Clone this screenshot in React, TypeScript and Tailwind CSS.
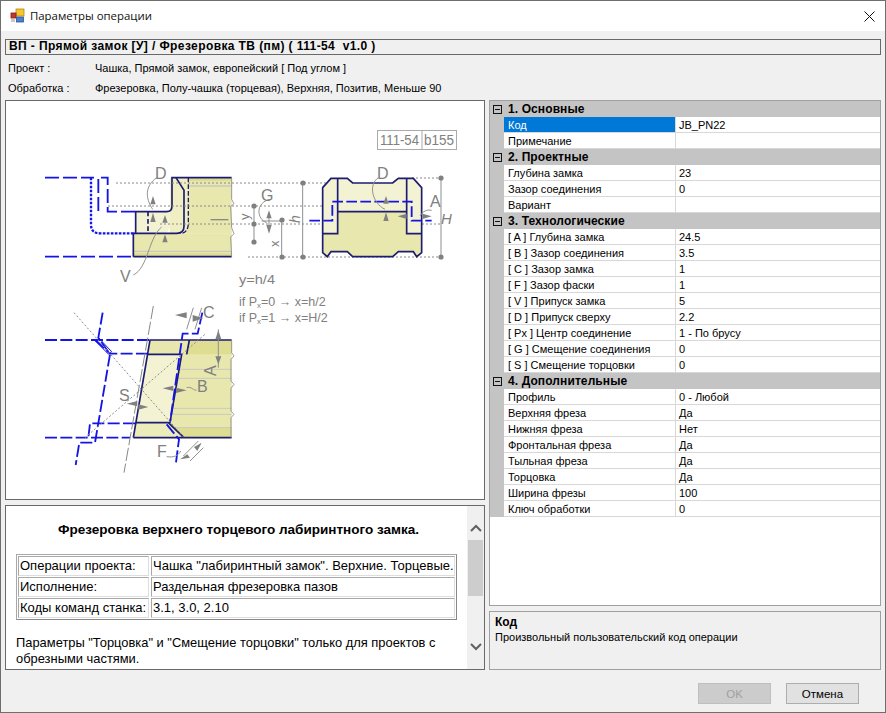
import React from "react";

const font = "font-['Liberation_Sans',Arial,sans-serif]";

type Row = { l: string; v?: string; sel?: boolean };
const groups: { t: string; rows: Row[] }[] = [
  { t: "1. Основные", rows: [{ l: "Код", v: "JB_PN22", sel: true }, { l: "Примечание" }] },
  { t: "2. Проектные", rows: [{ l: "Глубина замка", v: "23" }, { l: "Зазор соединения", v: "0" }, { l: "Вариант" }] },
  {
    t: "3. Технологические",
    rows: [
      { l: "[ A ] Глубина замка", v: "24.5" },
      { l: "[ B ] Зазор соединения", v: "3.5" },
      { l: "[ C ] Зазор замка", v: "1" },
      { l: "[ F ] Зазор фаски", v: "1" },
      { l: "[ V ] Припуск замка", v: "5" },
      { l: "[ D ] Припуск сверху", v: "2.2" },
      { l: "[ Px ] Центр соединение", v: "1 - По брусу" },
      { l: "[ G ] Смещение соединения", v: "0" },
      { l: "[ S ] Смещение торцовки", v: "0" },
    ],
  },
  {
    t: "4. Дополнительные",
    rows: [
      { l: "Профиль", v: "0 - Любой" },
      { l: "Верхняя фреза", v: "Да" },
      { l: "Нижняя фреза", v: "Нет" },
      { l: "Фронтальная фреза", v: "Да" },
      { l: "Тыльная фреза", v: "Да" },
      { l: "Торцовка", v: "Да" },
      { l: "Ширина фрезы", v: "100" },
      { l: "Ключ обработки", v: "0" },
    ],
  },
];

const NAVY = "#1c1c70";
const BLUE = "#1414e6";

function Dot({ x, y }: { x: number; y: number }) {
  return <circle cx={x} cy={y} r={2.6} fill="#808080" />;
}

function Diagram() {
  const lbl = { fill: "#808080", fontFamily: "'Liberation Sans',sans-serif" };
  const nav = { fill: "none", stroke: NAVY, strokeWidth: 5 };
  const blu = { fill: "none", stroke: BLUE, strokeWidth: 5.5, strokeDasharray: "42 12" };
  const dot = { stroke: "#8a8a8a", strokeWidth: 1, strokeDasharray: "2 2", fill: "none" };
  const arrow = "#808080";
  return (
    <svg width="478" height="398" viewBox="6 100 478 398" className="block">
      {/* Stamp */}
      <rect x="377.5" y="129.5" width="79" height="19" fill="#fff" stroke="#aaa" />
      <line x1="422" y1="129" x2="422" y2="148" stroke="#aaa" />
      <text x="380" y="144" fontSize="15" textLength="39" lengthAdjust="spacingAndGlyphs" {...lbl}>111-54</text>
      <text x="424" y="144" fontSize="15" textLength="30" lengthAdjust="spacingAndGlyphs" {...lbl}>b155</text>

      {/* Section 1 */}
      <g transform="translate(20 120) scale(0.33333)">
        <path d="M340 337 L635 337 L635 407 L342 407 Z" fill="#e8e7ae" />
        <path d="M450 170 H635 V337 H450 Z" fill="#e8e7ae" />
        <path d="M450 170 H505 V320 L490 337 H450 Z" fill="#f0efc4" />
        <path d="M347 272 H450 V320 L440 337 H347 Z" fill="#f3f2d2" />
        <path d="M505 170 H635 V180 H505 Z" fill="#dedd92" />
        <path d="M342 397 H635 V407 H342 Z" fill="#dedd92" />
        <path d="M505 195 H635 M342 391 H635" stroke="#c9c9c0" strokeWidth="4" />
        <path d="M340 407 V337 H470 Q492 337 492 315 V208 L468 170" {...nav} />
        <path d="M347 337 V272 H440 Q456 272 456 255 V170 H635 M340 407 H635" {...nav} />
        <path d="M505 170 V305 Q505 337 480 337" {...nav} strokeDasharray="14 6" strokeWidth="4" />
        <path d="M384 272 V337" {...nav} strokeDasharray="14 8" />
        <path d="M635 170 V235 L642 248 L632 256 L635 320 L642 338 L632 348 L635 407" fill="none" stroke="#888" strokeWidth="2.5" />
        <path d="M75 170 H222 M235 270 V170 H263 V272 H350 M75 407 H340" {...blu} />
        <path d="M213 170 V310 Q213 337 240 337 H345" fill="none" stroke={BLUE} strokeWidth="7" strokeDasharray="8 4" />
        <path d="M410 170 C375 195 375 230 398 265 M340 462 C385 440 385 350 425 318" fill="none" stroke="#909090" strokeWidth="3" />
        <path d="M399 225 L391 250 H407 Z M399 275 L391 303 H407 Z M435 282 L427 305 H443 Z M435 340 L427 364 H443 Z" fill={arrow} />
        <line x1="572" y1="296" x2="625" y2="296" stroke="#888" strokeWidth="4" />
      </g>
      <text x="155" y="178" fontSize="16" {...lbl}>D</text>
      <text x="120" y="281" fontSize="16" {...lbl}>V</text>

      {/* Guide lines */}
      <g {...dot}>
        <path d="M116 182 H350" />
        <path d="M108 205 H424" />
        <path d="M160 223 H254" />
        <path d="M254 223 H440" />
        <path d="M248 256 H441" />
        <path d="M412 177 H441" />
      </g>

      {/* Section 2 */}
      <g transform="translate(250 120) scale(0.33333)">
        <path d="M218 200 L243 172 H292 L308 186 H428 L445 172 H490 L515 200 V395 L500 407 L490 392 H445 L428 407 H308 L292 392 H243 L232 407 L218 395 Z" fill="#f3f2d2" />
        <path d="M218 338 H263 V272 H470 V338 H515 V395 L500 407 L490 392 H445 L428 407 H308 L292 392 H243 L232 407 L218 395 Z" fill="#e8e7ae" />
        <path d="M218 200 L243 172 H292 L308 186 H428 L445 172 H490 L515 200 V395 L500 407 L490 392 H445 L428 407 H308 L292 392 H243 L232 407 L218 395 Z" {...nav} />
        <path d="M218 338 H263 V272 H470 V338 H515 M263 172 V272 M470 172 V272" {...nav} />
        <path d="M178 299 H247 V242 H485 V299 H545" {...blu} strokeDasharray="32 10" />
        <path d="M385 170 C355 190 365 245 405 265 M510 285 C520 270 530 265 545 268" fill="none" stroke="#909090" strokeWidth="3" />
        <path d="M408 225 L400 248 H416 Z M408 274 L400 300 H416 Z M443 286 L470 278 V294 Z M545 286 L518 278 V294 Z M57 268 L49 292 H65 Z M57 338 L49 312 H65 Z" fill={arrow} />
        <path d="M158 186 V407 M573 170 V407 M95 296 V407 M12 255 V364 M57 290 V320 M35 300 H95" fill="none" stroke="#909090" strokeWidth="3" />
        <path d="M60 235 C15 245 20 295 50 305" fill="none" stroke="#909090" strokeWidth="3" />
      </g>
      <Dot x={303} y={182} /><Dot x={303} y={256} /><Dot x={441} y={177} /><Dot x={441} y={256} />
      <Dot x={282} y={219} /><Dot x={282} y={256} /><Dot x={254} y={205} /><Dot x={254} y={223} /><Dot x={254} y={241} />
      <text x="377" y="178" fontSize="16" {...lbl}>D</text>
      <text x="430" y="206" fontSize="16" {...lbl}>A</text>
      <text x="441" y="223" fontSize="15" fontStyle="italic" {...lbl}>H</text>
      <text x="261" y="200" fontSize="16" {...lbl}>G</text>
      <text transform="translate(300 222) rotate(-90)" fontSize="14" fontStyle="italic" {...lbl}>h</text>
      <text transform="translate(279 246) rotate(-90)" fontSize="13" {...lbl}>x</text>
      <text transform="translate(249 219) rotate(-90)" fontSize="13" {...lbl}>y</text>

      <text x="239" y="283" fontSize="12" textLength="36" lengthAdjust="spacingAndGlyphs" {...lbl}>y=h/4</text>
      <text x="239" y="305" fontSize="12.5" {...lbl}>if P<tspan fontSize="8" dy="2">x</tspan><tspan dy="-2">=0 → x=h/2</tspan></text>
      <text x="239" y="321" fontSize="12.5" {...lbl}>if P<tspan fontSize="8" dy="2">x</tspan><tspan dy="-2">=1 → x=H/2</tspan></text>

      {/* Section 3 */}
      <g transform="translate(30 290) scale(0.33333)">
        <path d="M360 147 H605 V440 H310 Z" fill="#e8e7ae" />
        <path d="M478 147 H605 V190 H470 Z" fill="#dedd92" />
        <path d="M355 190 H455 L420 395 H318 Z" fill="#f3f2d2" />
        <path d="M318 395 H415 L462 440 H310 Z" fill="#ecebba" />
        <path d="M405 395 L462 440 H605 V410 H430 Z" fill="#dedd92" />
        <path d="M450 235 H605 M445 262 H605 M425 352 H605 M425 370 H605 M430 410 H605" stroke="#c9c9c0" strokeWidth="3" />
        <path d="M310 440 L360 147 H605 M355 190 H455 L420 395 M318 395 H415 L462 440 M310 440 H605 M478 147 L470 190" {...nav} />
        <path d="M605 147 V185 L612 195 L603 205 V270 L612 280 L603 292 V360 L612 370 L603 380 V440" fill="none" stroke="#888" strokeWidth="2.5" />
        <path d="M45 147 H360 M196 147 L240 188 H355 M45 440 H300 M315 397 H180 L175 440" {...blu} strokeDasharray="36 10" />
        <path d="M218 65 L205 140 L240 190 L195 455 H148 L137 522 M517 65 L503 128 H458 L420 395 M410 400 L447 445 L437 522" {...blu} strokeDasharray="36 10" />
        <path d="M205 140 L245 182 L236 190 L196 150" fill="none" stroke={BLUE} strokeWidth="3" />
        <path d="M370 45 L282 545" fill="none" stroke="#888" strokeWidth="3" strokeDasharray="40 8" />
        <path d="M132 65 L462 440 M165 440 L525 130" {...dot} strokeWidth="3" strokeDasharray="6 6" />
        <path d="M490 50 L470 115 M515 50 L495 115 M460 495 L505 450 M480 510 L520 470 M565 115 V230" fill="none" stroke="#909090" strokeWidth="3" />
        <path d="M435 72 L470 64 V82 Z M520 82 L488 72 V92 Z M565 118 L556 145 H574 Z M565 220 L556 196 H574 Z M398 292 L430 284 V300 Z M470 298 L438 290 V306 Z M290 338 L322 330 V346 Z M355 348 L325 340 V356 Z M450 505 L472 490 L480 500 Z M515 455 L492 468 L502 480 Z" fill={arrow} />
        <path d="M470 290 C485 285 490 300 500 297 M410 497 C430 500 445 495 452 480" fill="none" stroke="#909090" strokeWidth="3" />
      </g>
      <text x="203" y="317" fontSize="16" {...lbl}>C</text>
      <text x="197" y="391" fontSize="16" {...lbl}>B</text>
      <text x="119" y="400" fontSize="16" {...lbl}>S</text>
      <text x="157" y="456" fontSize="16" {...lbl}>F</text>
      <text transform="translate(216 375) rotate(-90)" fontSize="16" {...lbl}>A</text>
    </svg>
  );
}

function AppIcon() {
  return (
    <svg width="16" height="16" viewBox="0 0 16 16" className="shrink-0">
      <rect x="6" y="1" width="8" height="7" fill="#f5c431" stroke="#b58a10" strokeWidth="0.8" />
      <rect x="1" y="5" width="5" height="5" fill="#c8352f" stroke="#7d1c18" strokeWidth="0.8" />
      <rect x="6.5" y="9" width="7" height="5" fill="#4d7fd0" stroke="#2c5299" strokeWidth="0.8" />
      <rect x="1" y="11" width="4" height="3" fill="#c9c9c9" />
    </svg>
  );
}

export default function App() {
  return (
    <div className={`${font} w-[886px] h-[713px] flex flex-col bg-[#f0f0f0] border border-[#6e6e6e] text-[11px] leading-[14px] text-black overflow-hidden`}>
      {/* Title */}
      <div className="h-[30px] bg-white flex items-center shrink-0 pl-[9px] pr-[10px]">
        <AppIcon />
        <span className="ml-[4px] font-['Open_Sans',sans-serif] text-[11.4px] text-[#111]">Параметры операции</span>
        <svg width="11" height="11" viewBox="0 0 11 11" className="ml-auto">
          <path d="M0.5 0.5 L10.5 10.5 M10.5 0.5 L0.5 10.5" stroke="#111" strokeWidth="1" fill="none" />
        </svg>
      </div>

      <div className="flex-1 flex flex-col px-[4px] pt-[8px] min-h-0">
        {/* Header */}
        <div className="h-[16px] border border-[#696969] font-bold text-[12px] tracking-[0.4px] leading-[13px] pl-[3px] whitespace-pre shrink-0">
          ВП - Прямой замок [У] / Фрезеровка ТВ (пм) ( 111-54  v1.0 )
        </div>
        <div className="flex h-[14px] mt-[6px] items-center shrink-0">
          <span className="w-[90px] pl-[3px]">Проект :</span>
          <span>Чашка, Прямой замок, европейский [ Под углом ]</span>
        </div>
        <div className="flex h-[14px] mt-[6px] items-center shrink-0">
          <span className="w-[90px] pl-[3px]">Обработка :</span>
          <span>Фрезеровка, Полу-чашка (торцевая), Верхняя, Позитив, Меньше 90</span>
        </div>

        <div className="flex gap-[4px] mt-[5px] h-[570px] shrink-0">
          {/* Left column */}
          <div className="w-[480px] flex flex-col gap-[5px]">
            <div className="h-[400px] border border-[#696969] bg-white overflow-hidden">
              <Diagram />
            </div>
            <div className="h-[165px] border border-[#696969] bg-white flex overflow-hidden">
              <div className="flex-1 min-w-0 pl-[10px] pr-[9px] text-[13px] leading-[16px]">
                <div className="mt-[16px] text-center font-bold text-[13.5px] pl-[3px] whitespace-nowrap">Фрезеровка верхнего торцевого лабиринтного замка.</div>
                <div className="mt-[16px] border border-[#a8a8a8] border-r-[#888] border-b-[#888] p-px flex flex-col gap-px w-[441px]">
                  {[
                    ["Операции проекта:", 'Чашка "лабиринтный замок". Верхние. Торцевые.'],
                    ["Исполнение:", "Раздельная фрезеровка пазов"],
                    ["Коды команд станка:", "3.1, 3.0, 2.10"],
                  ].map((r) => (
                    <div key={r[0]} className="flex gap-[2px] h-[20px]">
                      <div className="w-[131px] border border-[#a8a8a8] border-r-[#ddd] border-b-[#ddd] pl-px leading-[18px] whitespace-nowrap">{r[0]}</div>
                      <div className="flex-1 border border-[#a8a8a8] border-r-[#ddd] border-b-[#ddd] pl-px leading-[18px] whitespace-nowrap">{r[1]}</div>
                    </div>
                  ))}
                </div>
                <p className="mt-[15px] w-[440px] text-[12.9px]">Параметры "Торцовка" и "Смещение торцовки" только для проектов с обрезными частями.</p>
              </div>
              <div className="w-[17px] shrink-0 bg-[#f0f0f0] flex flex-col items-center">
                <svg width="12" height="8" viewBox="0 0 12 8" className="mt-[18px]">
                  <path d="M1 7 L6 2 L11 7" stroke="#606060" strokeWidth="2" fill="none" />
                </svg>
                <div className="mt-[8px] w-[15px] h-[56px] bg-[#cdcdcd]" />
                <svg width="12" height="8" viewBox="0 0 12 8" className="mt-[47px]">
                  <path d="M1 1 L6 6 L11 1" stroke="#606060" strokeWidth="2" fill="none" />
                </svg>
              </div>
            </div>
          </div>

          {/* Right column */}
          <div className="flex-1 flex flex-col gap-[5px] min-w-0">
            <div className="h-[507px] border border-[#a0a0a0] bg-white flex flex-col overflow-hidden">
              {groups.map((g) => (
                <div key={g.t}>
                  <div className="h-[16px] bg-[#c4c4c4] flex items-center">
                    <span className="w-[9px] h-[9px] ml-[3px] border border-[#111] flex items-center justify-center shrink-0">
                      <span className="w-[5px] h-px bg-[#111]" />
                    </span>
                    <span className="ml-[6px] font-bold text-[12px] tracking-[0.1px]">{g.t}</span>
                  </div>
                  {g.rows.map((r) => (
                    <div key={r.l} className="h-[16px] flex">
                      <div className="w-[14px] bg-[#c4c4c4] shrink-0" />
                      <div className={`w-[172px] shrink-0 pl-[4px] leading-[16px] border-b border-r border-[#d8d8d8] whitespace-nowrap ${r.sel ? "bg-[#0078d7] text-white" : ""}`}>{r.l}</div>
                      <div className="flex-1 pl-[3px] leading-[16px] border-b border-[#d8d8d8]">{r.v}</div>
                    </div>
                  ))}
                </div>
              ))}
            </div>
            <div className="h-[59px] border border-[#a0a0a0] pl-[5px] pt-[3px]">
              <div className="font-bold text-[12px] leading-[14px]">Код</div>
              <div className="mt-px leading-[14px]">Произвольный пользовательский код операции</div>
            </div>
          </div>
        </div>

        {/* Buttons */}
        <div className="flex justify-end gap-[15px] mt-[13px] pr-[22px]">
          <div className="w-[73px] h-[21px] bg-[#cccccc] border border-[#bfbfbf] flex items-center justify-center text-[#a0a0a0] text-[11.5px]">OK</div>
          <div className="w-[73px] h-[21px] bg-[#e1e1e1] border border-[#adadad] flex items-center justify-center text-[11.5px]">Отмена</div>
        </div>
      </div>
    </div>
  );
}
